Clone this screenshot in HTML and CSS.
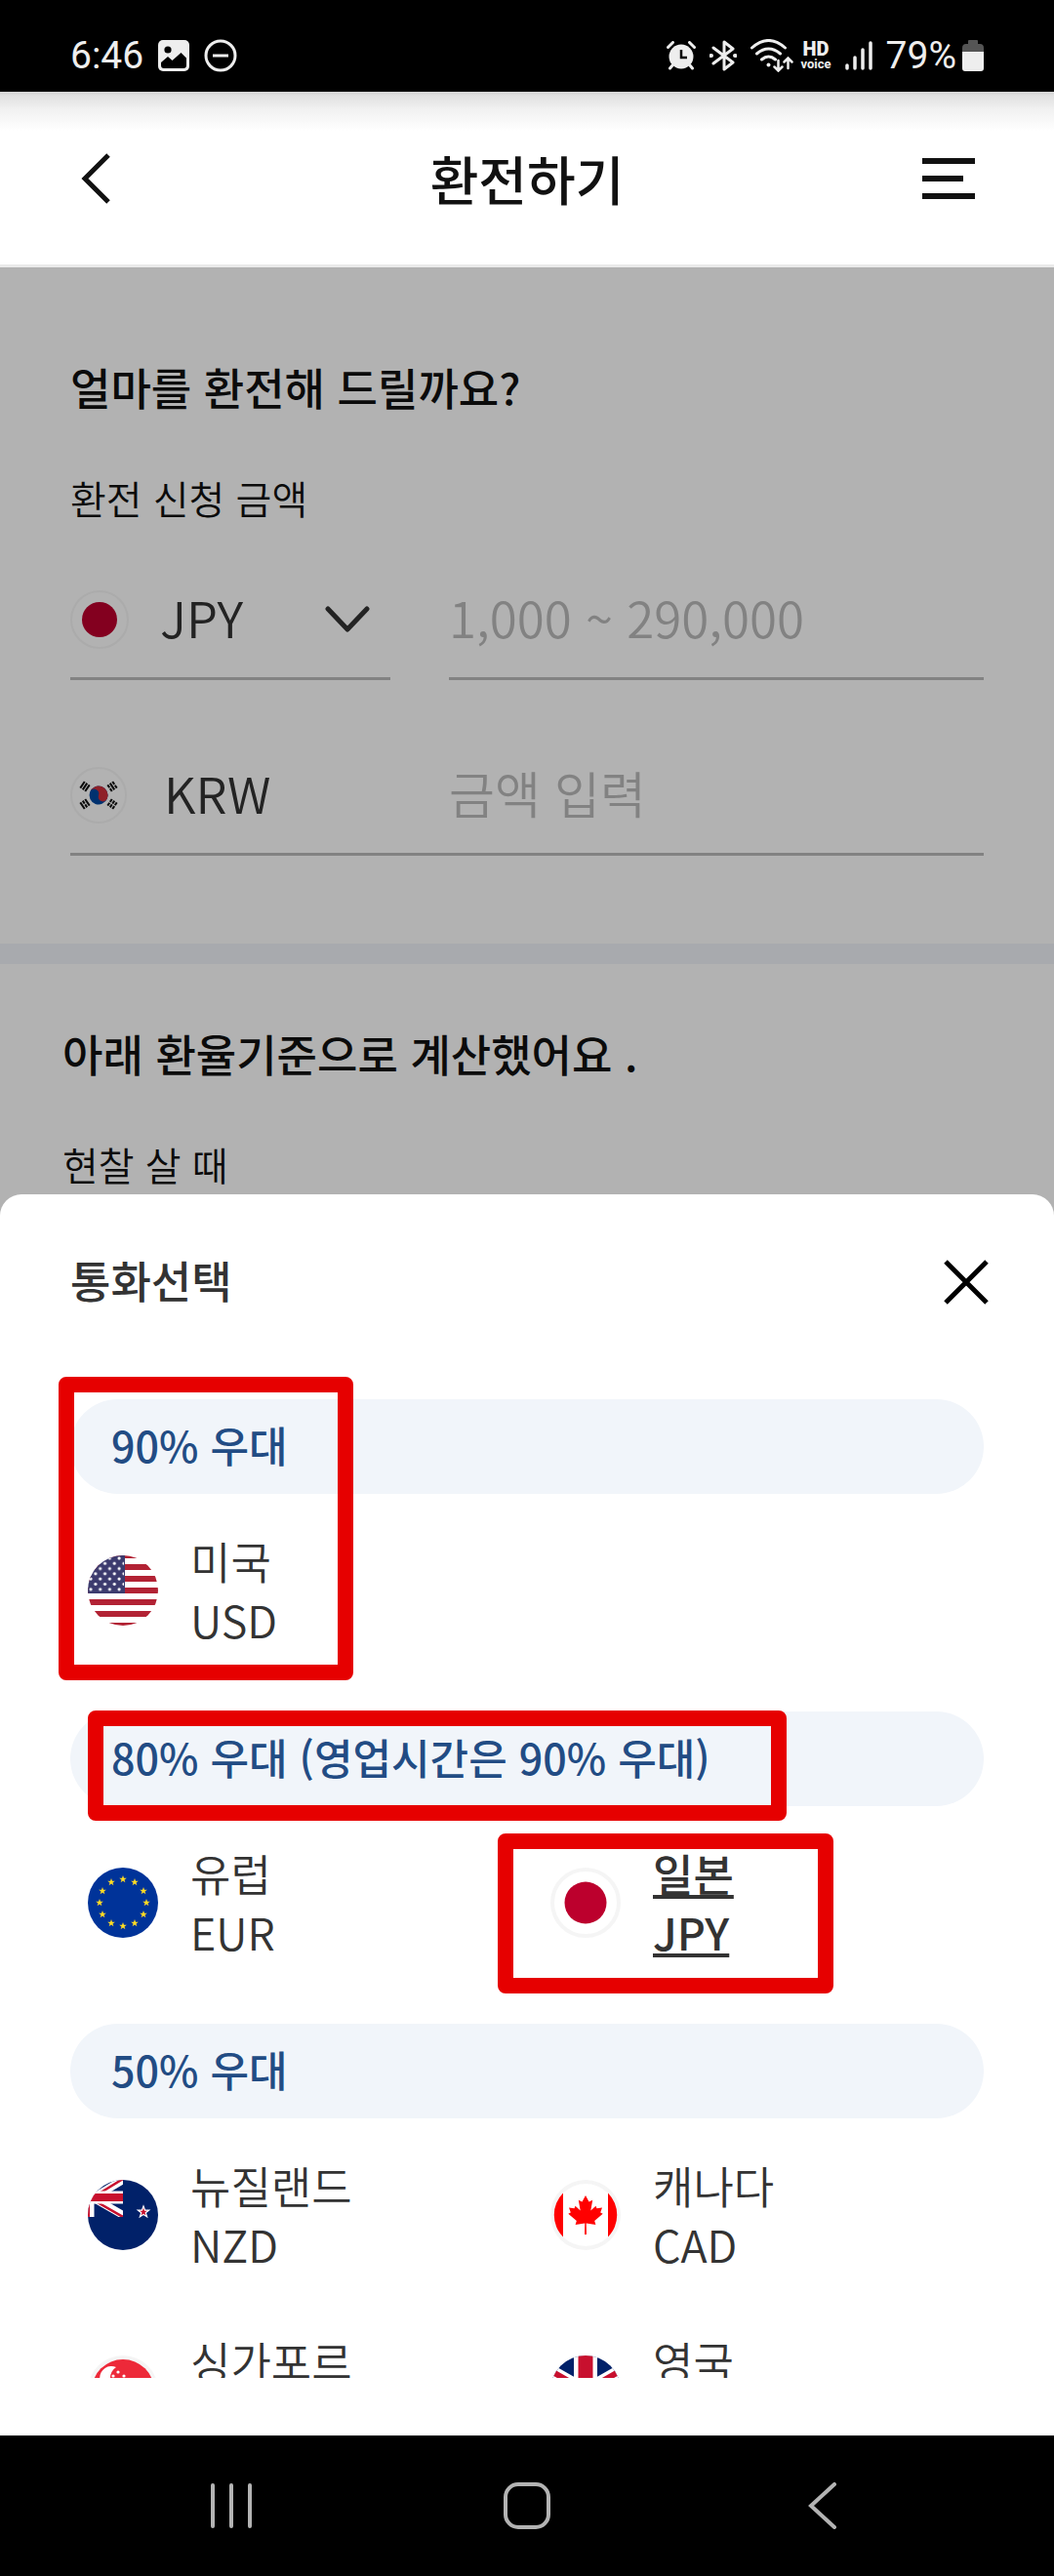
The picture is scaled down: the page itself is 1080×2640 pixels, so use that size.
FILE: index.html
```html
<!DOCTYPE html>
<html lang="ko">
<head>
    <meta charset="UTF-8">
    <meta name="viewport" content="width=device-width, initial-scale=1.0">
    <title>환전하기</title>
    <link rel="stylesheet" href="styles.css">
</head>
<body>
<div class="phone">

    <div class="status-bar">
        <div class="status-left">
            <span>6:46</span>
            <svg width="32" height="32" viewBox="0 0 32 32">
                <rect width="32" height="32" rx="5" fill="#eee"/>
                <circle cx="10" cy="10" r="3.6"/>
                <path d="M3 25V23l7-6 4.500 4 9-8 5.500 5.500V26a3 3 0 0 1-3 3H6a3 3 0 0 1-3-3z"/>
            </svg>
            <svg width="34" height="34" viewBox="0 0 34 34" fill="none" stroke="#eee" stroke-width="3">
                <circle cx="17" cy="17" r="15"/>
                <path d="M9 17h16"/>
            </svg>
        </div>
        <div class="status-right">
            <svg class="alarm" width="30" height="30" viewBox="0 0 30 30">
                <circle cx="15" cy="16" r="12.500" fill="#eee"/>
                <path d="M1.500 6.500l5-5M28.500 6.500l-5-5M6 25l-2.500 3M24 25l2.500 3" stroke="#eee" stroke-width="3" stroke-linecap="round"/>
                <path d="M15 9v8h6" fill="none" stroke="#000" stroke-width="2.500"/>
            </svg>
            <svg class="bluetooth" width="28" height="32" viewBox="0 0 28 32" fill="none" stroke="#eee" stroke-width="3" stroke-linejoin="round" stroke-linecap="round">
                <path d="M4 8l20 15-9 7V2l9 7L4 24"/>
                <path d="M1.500 16h.5M26 16h.5" stroke-width="4"/>
            </svg>
            <svg class="wifi" width="44" height="34" viewBox="0 0 44 34" fill="none" stroke="#eee" stroke-width="3" stroke-linecap="round">
                <path d="M1.500 9q17-15 34 0M6.500 15q12-10 24 0M11.500 21q7-6 14 0"/>
                <circle cx="18.500" cy="26.500" r="2" fill="#eee" stroke="none"/>
                <path d="M28.500 22v10M24.500 28.500l4 4 4-4M38.500 30v-10M34.500 23.500l4-4 4 4" stroke-width="2.500"/>
            </svg>
            <span class="hd"><b>HD</b><small>voice</small></span>
            <svg class="signal" width="28" height="30" viewBox="0 0 28 30" stroke="#eee" stroke-width="3.500" stroke-linecap="round">
                <path d="M2 25v3M10 17v11M18 9v19M26 2v26"/>
            </svg>
            <span>79%</span>
            <svg class="battery" width="22" height="32" viewBox="0 0 22 32">
                <path d="M6 1q0-1 1-1h8q1 0 1 1v3h2q4 0 4 4v5H0V8q0-4 4-4h2z" fill="#555"/>
                <path d="M0 12h22v17q0 3-3 3H3q-3 0-3-3z" fill="#eee"/>
            </svg>
        </div>
    </div>

    <header class="header">
        <button class="icon-button" aria-label="뒤로">
            <svg width="54" height="54" viewBox="0 0 54 54" fill="none" stroke="#111" stroke-width="5"><path d="M30 3L6 27l24 24"/></svg>
        </button>
        <h1>환전하기</h1>
        <button class="icon-button" aria-label="메뉴">
            <svg width="54" height="54" viewBox="0 0 54 54" fill="#111"><path d="M0 6h54v6H0zM0 24h42v6H0zM0 42h54v6H0z"/></svg>
        </button>
    </header>

    <main class="main">
        <section class="amount">
            <h2>얼마를 환전해 드릴까요?</h2>
            <p class="sub">환전 신청 금액</p>
            <div class="row">
                <div class="currency">
                    <svg width="60" height="60" viewBox="0 0 60 60">
                        <circle cx="30" cy="30" r="29" fill="#fff" stroke="#f5f5f5" stroke-width="2"/>
                        <circle cx="30" cy="30" r="18" fill="#bc002d"/>
                    </svg>
                    <select aria-label="통화">
                        <option>JPY</option>
                        <option>USD</option>
                        <option>EUR</option>
                    </select>
                    <svg class="chevron" width="46" height="28" viewBox="0 0 46 28" fill="none" stroke="#333" stroke-width="5" stroke-linecap="round" stroke-linejoin="round"><path d="M3 3l20 21L43 3"/></svg>
                </div>
                <input type="text" class="field" placeholder="1,000 ~ 290,000" aria-label="외화 금액">
            </div>
            <div class="row row-krw">
                <label class="currency" for="krw">
                    <svg width="60" height="60" viewBox="0 0 60 60">
                        <circle cx="29" cy="30" r="28" fill="#fff" stroke="#f5f5f5" stroke-width="2"/>
                        <g transform="rotate(20 29 30)">
                            <circle cx="29" cy="30" r="9.500" fill="#0047a0"/>
                            <path d="M19.500 30a9.500 9.500 0 0 1 19 0a4.750 4.750 0 0 1-9.500 0a4.750 4.750 0 0 0-9.500 0z" fill="#cd2e3a"/>
                        </g>
                        <g stroke="#111" stroke-width="2">
                            <path d="M-4-3h8M-4 0h8M-4 3h8" transform="translate(15 21) rotate(-56)"/>
                            <path d="M-4-3h3.500M.5-3h3.500M-4 0h8M-4 3h3.500M.5 3h3.500" transform="translate(43 21) rotate(56)"/>
                            <path d="M-4-3h8M-4 0h3.500M.5 0h3.500M-4 3h8" transform="translate(15 39) rotate(56)"/>
                            <path d="M-4-3h3.500M.5-3h3.500M-4 0h3.500M.5 0h3.500M-4 3h3.500M.5 3h3.500" transform="translate(43 39) rotate(-56)"/>
                        </g>
                    </svg>
                    <span>KRW</span>
                </label>
                <input type="text" id="krw" class="field" placeholder="금액 입력">
            </div>
        </section>

        <section class="rate">
            <h2>아래 환율기준으로 계산했어요 .</h2>
            <p class="sub">현찰 살 때</p>
        </section>

        <div class="dim"></div>

        <div class="sheet" role="dialog" aria-labelledby="sheetTitle">
            <div class="sheet-head">
                <h2 id="sheetTitle">통화선택</h2>
                <button class="icon-button" aria-label="닫기">
                    <svg width="46" height="46" viewBox="0 0 46 46" stroke="#000" stroke-width="5"><path d="M2 2l42 42M44 2L2 44"/></svg>
                </button>
            </div>
            <div class="sheet-list">
                <section class="group">
                    <h3>90% 우대</h3>
                    <div class="items">
                        <button class="item">
                            <svg width="72" height="72" viewBox="0 0 72 72">
                                <defs>
                                    <clipPath id="round"><circle cx="36" cy="36" r="36"/></clipPath>
                                    <pattern id="stars" width="9.700" height="10.600" patternUnits="userSpaceOnUse">
                                        <circle cx="3" cy="3" r="1.600" fill="#fff"/>
                                        <circle cx="7.850" cy="8.300" r="1.600" fill="#fff"/>
                                    </pattern>
                                </defs>
                                <g clip-path="url(#round)">
                                    <path fill="#fff" d="M0 0h72v72H0z"/>
                                    <path fill="#b22234" d="M0 0h72v3H0zM0 9h72v6H0zM0 21h72v6H0zM0 33h72v6H0zM0 45h72v6H0zM0 57h72v6H0zM0 69h72v3H0z"/>
                                    <path fill="#3c3b6e" d="M0 0h38v39H0z"/>
                                    <path fill="url(#stars)" d="M0 0h37v38H0z"/>
                                </g>
                            </svg>
                            <span>미국<br>USD</span>
                        </button>
                    </div>
                </section>

                <section class="group">
                    <h3>80% 우대 (영업시간은 90% 우대)</h3>
                    <div class="items">
                        <button class="item">
                            <svg width="72" height="72" viewBox="0 0 72 72">
                                <defs><path id="star" d="M0-4L1 -1.300H3.800L1.500.500 2.400 3.200 0 1.600-2.400 3.200-1.500.500-3.800-1.300H-1z"/></defs>
                                <circle cx="36" cy="36" r="36" fill="#039"/>
                                <g fill="#fd2">
                                    <use href="#star" x="36" y="12"/><use href="#star" x="48" y="15"/>
                                    <use href="#star" x="57" y="24"/><use href="#star" x="60" y="36"/>
                                    <use href="#star" x="57" y="48"/><use href="#star" x="48" y="57"/>
                                    <use href="#star" x="36" y="60"/><use href="#star" x="24" y="57"/>
                                    <use href="#star" x="15" y="48"/><use href="#star" x="12" y="36"/>
                                    <use href="#star" x="15" y="24"/><use href="#star" x="24" y="15"/>
                                </g>
                            </svg>
                            <span>유럽<br>EUR</span>
                        </button>
                        <button class="item selected">
                            <svg width="72" height="72" viewBox="0 0 72 72">
                                <circle cx="36" cy="36" r="34" fill="#fff" stroke="#f5f5f5" stroke-width="4"/>
                                <circle cx="36" cy="36" r="21.500" fill="#bc002d"/>
                            </svg>
                            <span>일본<br>JPY</span>
                        </button>
                    </div>
                </section>

                <section class="group">
                    <h3>50% 우대</h3>
                    <div class="items">
                        <button class="item">
                            <svg width="72" height="72" viewBox="0 0 72 72">
                                <g clip-path="url(#round)">
                                    <path fill="#012169" d="M0 0h72v72H0z"/>
                                    <svg width="36" height="38" viewBox="0 0 36 38">
                                        <path d="M-34-4L36 36M-34 42L36 0" stroke="#fff" stroke-width="8"/>
                                        <path d="M-34-2L36 38M-34 42L36 -1" stroke="#c8102e" stroke-width="2.500"/>
                                        <path d="M0 18h36M0 0v38" stroke="#fff" stroke-width="13"/>
                                        <path d="M0 18h36" stroke="#c8102e" stroke-width="8"/>
                                        <path d="M0 0v38" stroke="#c8102e" stroke-width="4"/>
                                    </svg>
                                    <use href="#star" transform="translate(57 33) scale(1.500)" fill="#c8102e" stroke="#fff" stroke-width=".8"/>
                                </g>
                            </svg>
                            <span>뉴질랜드<br>NZD</span>
                        </button>
                        <button class="item">
                            <svg width="72" height="72" viewBox="0 0 72 72">
                                <circle cx="36" cy="36" r="36" fill="#f5f5f5"/>
                                <circle cx="36" cy="36" r="32" fill="#fff"/>
                                <path d="M13 13.500A32 32 0 0 0 13 58.500zM59 13.500A32 32 0 0 1 59 58.500z" fill="#f00"/>
                                <path d="M36 16l-3.500 6.500-3.700-1.700 1.900 10.700-5.200-4.800-1 2.600-5.500-.9 1.800 5.100-2.500 1.300 8.500 7.200-1.200 3.900 9.700-1.400-.3 11.500h2l-.3-11.500 9.700 1.400-1.200-3.900 8.500-7.200-2.500-1.300 1.800-5.100-5.500.9-1-2.600-5.200 4.800 1.900-10.700-3.700 1.700z" fill="#f00"/>
                            </svg>
                            <span>캐나다<br>CAD</span>
                        </button>
                        <button class="item">
                            <svg width="72" height="72" viewBox="0 0 72 72">
                                <circle cx="36" cy="36" r="36" fill="#f5f5f5"/>
                                <circle cx="36" cy="36" r="32" fill="#fff"/>
                                <path d="M4 36a32 32 0 0 1 64 0z" fill="#ed2939"/>
                                <path d="M29 12a12 12 0 1 0 0 22a13 13 0 0 1 0-22z" fill="#fff"/>
                                <g fill="#fff"><circle cx="31" cy="17" r="1.600"/><circle cx="26" cy="21" r="1.600"/><circle cx="37" cy="21" r="1.600"/><circle cx="28" cy="28" r="1.600"/><circle cx="35" cy="28" r="1.600"/></g>
                            </svg>
                            <span>싱가포르<br>SGD</span>
                        </button>
                        <button class="item">
                            <svg width="72" height="72" viewBox="0 0 72 72">
                                <g clip-path="url(#round)">
                                    <path fill="#012169" d="M0 0h72v72H0z"/>
                                    <path d="M-10 10l92 52M-10 62l92-52" stroke="#fff" stroke-width="13"/>
                                    <path d="M-10 10l92 52M-10 62l92-52" stroke="#c8102e" stroke-width="6"/>
                                    <path d="M36 0v72M0 36h72" stroke="#fff" stroke-width="24"/>
                                    <path d="M36 0v72M0 36h72" stroke="#c8102e" stroke-width="15"/>
                                </g>
                            </svg>
                            <span>영국<br>GBP</span>
                        </button>
                    </div>
                </section>
            </div>

            <!-- highlight boxes -->
            <div class="mark mark-usd"></div>
            <div class="mark mark-rate"></div>
            <div class="mark mark-jpy"></div>
        </div>
    </main>

    <nav class="nav-bar">
        <button class="icon-button" aria-label="최근 앱">
            <svg width="48" height="48" viewBox="0 0 48 48" stroke="#b3b3b3" stroke-width="4" stroke-linecap="round"><path d="M5 3v42M24 3v42M43 3v42"/></svg>
        </button>
        <button class="icon-button" aria-label="홈">
            <svg width="48" height="48" viewBox="0 0 48 48" fill="none" stroke="#b3b3b3" stroke-width="4"><rect x="2" y="2" width="44" height="44" rx="13"/></svg>
        </button>
        <button class="icon-button" aria-label="이전">
            <svg width="48" height="48" viewBox="0 0 48 48" fill="none" stroke="#b3b3b3" stroke-width="4" stroke-linecap="round"><path d="M36 2L12 24l24 22"/></svg>
        </button>
    </nav>

</div>
</body>
</html>
```
FILE: styles.css
```css
* {
    box-sizing: border-box;
}
body {
    margin: 0;
    background-color: #fff;
    color: #111;
    font-family: "Noto Sans CJK KR", sans-serif;
}
h1, h2, h3, p {
    margin: 0;
    font-weight: 500;
}
button, select, input {
    margin: 0;
    padding: 0;
    border: none;
    border-radius: 0;
    background: none;
    color: inherit;
    font: inherit;
}
svg {
    display: block;
    flex: none;
}
.phone {
    min-height: 100vh;
    display: flex;
    flex-direction: column;
}
.icon-button {
    cursor: pointer;
}

/* Status bar */
.status-bar {
    height: 94px;
    padding: 19px 72px 0 72px;
    display: flex;
    justify-content: space-between;
    align-items: center;
    background-color: #000;
    color: #eee;
    font-family: Roboto, sans-serif;
    font-size: 39px;
}
.status-left {
    display: flex;
    align-items: center;
    gap: 15px;
}
.status-right {
    display: flex;
    align-items: center;
    gap: 14px;
}
.hd {
    display: flex;
    flex-direction: column;
    align-items: center;
    font-weight: 700;
}
.hd b {
    font-size: 20px;
    line-height: 18px;
}
.hd small {
    font-size: 13px;
    line-height: 13px;
}
.status-right .battery {
    margin-left: -8px;
}
.status-right .wifi {
    margin-right: -6px;
}

/* Header */
.header {
    height: 180px;
    padding: 0 81px;
    display: flex;
    justify-content: space-between;
    align-items: center;
    border-bottom: 3px solid #eaeaea;
    background: linear-gradient(#d4d4d4, #e0e0e0 4px, #f1f1f1 18px, #fff 40px);
}
.header h1 {
    font-size: 54px;
    line-height: 80px;
}

/* Content below the sheet */
.main {
    flex: 1;
    position: relative;
    overflow: hidden;
}
.main h2 {
    font-size: 45px;
    line-height: 70px;
}
.sub {
    font-size: 40px;
    font-weight: 350;
    line-height: 60px;
}
.amount {
    padding: 88px 72px 90px;
    border-bottom: 21px solid #f1f4f9;
}
.amount .sub {
    margin-top: 48px;
}
.row {
    display: flex;
    gap: 60px;
    margin-top: 35px;
    font-size: 51px;
    font-weight: 350;
    color: #333;
}
.currency {
    width: 328px;
    height: 122px;
    padding-right: 21px;
    display: flex;
    align-items: center;
    gap: 32px;
    border-bottom: 3px solid #bbb;
}
.currency select, .currency span {
    flex: 1;
    padding-bottom: 5px;
    appearance: none;
}
.field {
    flex: 1;
    min-width: 0;
    height: 122px;
    padding-bottom: 5px;
    border-bottom: 3px solid #bbb;
}
.field::placeholder {
    color: #bbb;
    opacity: 1;
}
.row-krw {
    margin-top: 58px;
    gap: 0;
    border-bottom: 3px solid #bbb;
}
.row-krw .currency {
    width: 388px;
    gap: 36px;
}
.row-krw .currency, .row-krw .field {
    height: 119px;
    border-bottom: none;
}
.rate {
    padding: 57px 64px;
}
.rate .sub {
    margin-top: 48px;
}
.dim {
    position: absolute;
    inset: 0;
    background-color: rgba(0, 0, 0, 0.3);
}

/* Currency sheet */
.sheet {
    position: absolute;
    left: 0;
    right: 0;
    bottom: 0;
    padding-bottom: 59px;
    border-radius: 22px 22px 0 0;
    background-color: #fff;
    color: #333;
}
.sheet-head {
    height: 180px;
    padding: 0 67px 0 72px;
    display: flex;
    justify-content: space-between;
    align-items: center;
}
.sheet-head h2 {
    padding-bottom: 4px;
}
.sheet-list {
    height: 1033px;
    padding: 30px 72px 0;
    overflow: hidden;
}
.group {
    margin-bottom: 34px;
}
.group h3 {
    padding: 0 42px 5px;
    border-radius: 49px;
    background-color: #f1f5fa;
    color: #224c84;
    font-size: 43px;
    line-height: 92px;
}
.items {
    display: grid;
    grid-template-columns: 1fr 1fr;
    column-gap: 12px;
    padding-top: 9px;
}
.item {
    height: 180px;
    padding-left: 18px;
    display: flex;
    align-items: center;
    gap: 33px;
    font-size: 45px;
    font-weight: 350;
    line-height: 60px;
    text-align: left;
    cursor: pointer;
}
.selected {
    font-weight: 500;
}
.selected span {
    text-decoration: underline;
}

/* Highlight boxes */
.mark {
    position: absolute;
    border: 16px solid #e60000;
    border-radius: 8px;
    pointer-events: none;
}
.mark-usd {
    top: 187px;
    left: 60px;
    width: 302px;
    height: 311px;
}
.mark-rate {
    top: 529px;
    left: 90px;
    width: 716px;
    height: 113px;
}
.mark-jpy {
    top: 655px;
    left: 510px;
    width: 344px;
    height: 164px;
}

/* Android navigation */
.nav-bar {
    height: 144px;
    padding: 0 213px;
    display: flex;
    justify-content: space-between;
    align-items: center;
    background-color: #000;
}
```
